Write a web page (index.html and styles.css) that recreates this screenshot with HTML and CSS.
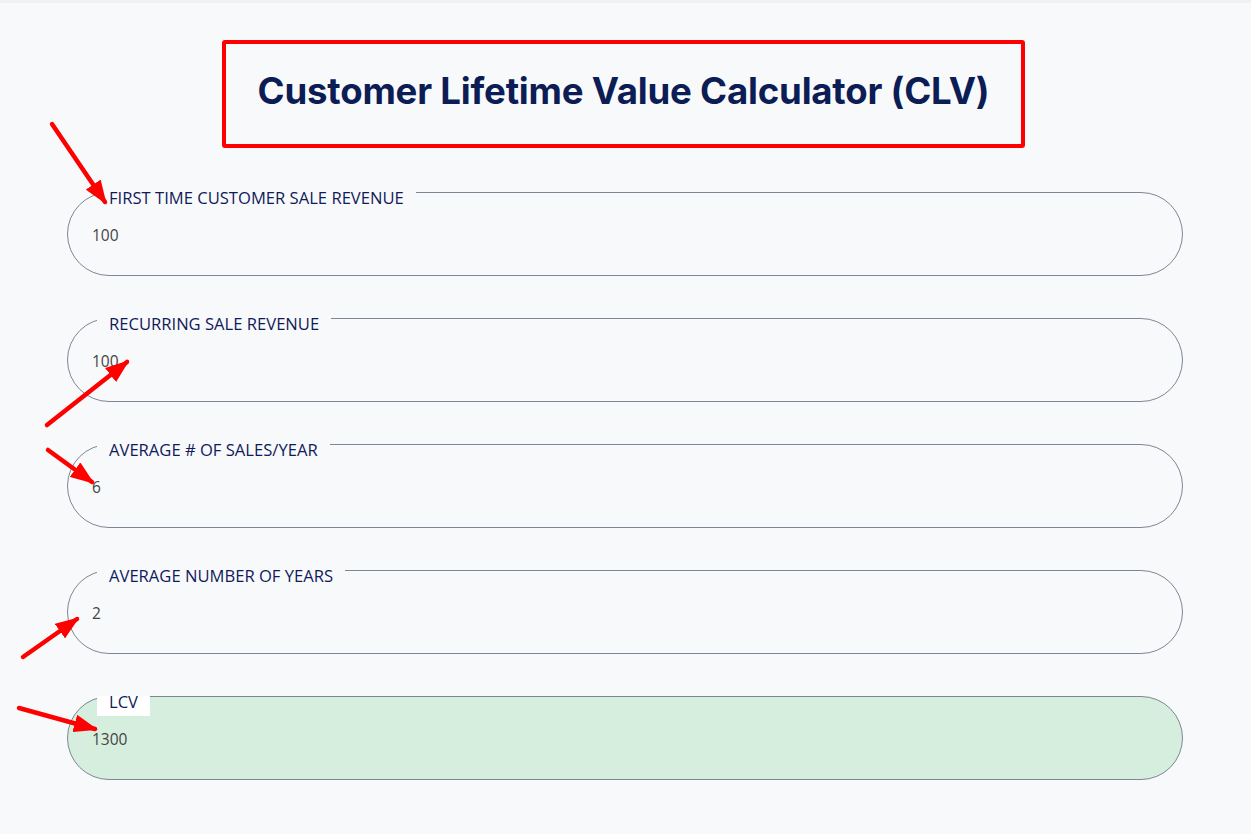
FILE: index.html
```html
<!DOCTYPE html>
<html lang="en">
<head>
<meta charset="utf-8">
<title>Customer Lifetime Value Calculator (CLV)</title>
<link rel="stylesheet" href="styles.css">
</head>
<body>
<div class="page">
  <div class="title-box">
    <h1 class="title">Customer Lifetime Value Calculator (CLV)</h1>
  </div>
  <div class="fields">
    <div class="field">
      <div class="label">FIRST TIME CUSTOMER SALE REVENUE</div>
      <div class="value">100</div>
    </div>
    <div class="field">
      <div class="label">RECURRING SALE REVENUE</div>
      <div class="value">100</div>
    </div>
    <div class="field">
      <div class="label">AVERAGE # OF SALES/YEAR</div>
      <div class="value">6</div>
    </div>
    <div class="field">
      <div class="label">AVERAGE NUMBER OF YEARS</div>
      <div class="value">2</div>
    </div>
    <div class="field field-result">
      <div class="label label-result">LCV</div>
      <div class="value">1300</div>
    </div>
  </div>
  <svg class="annotations" width="1251" height="834" viewBox="0 0 1251 834" aria-hidden="true">
    <defs>
      <marker id="head" viewBox="0 0 24 18" markerWidth="24" markerHeight="18" refX="21" refY="9" orient="auto" markerUnits="userSpaceOnUse">
        <path d="M0,0 L24,9 L0,18 Z" fill="#ff0000"/>
      </marker>
    </defs>
    <g stroke="#ff0000" stroke-width="4.5" stroke-linecap="round" fill="none">
      <line x1="52" y1="124" x2="105" y2="202" marker-end="url(#head)"/>
      <line x1="47" y1="425" x2="127" y2="362" marker-end="url(#head)"/>
      <line x1="48" y1="450" x2="92" y2="482" marker-end="url(#head)"/>
      <line x1="23" y1="657" x2="77" y2="619" marker-end="url(#head)"/>
      <line x1="19" y1="708" x2="95" y2="729" marker-end="url(#head)"/>
    </g>
  </svg>
</div>
</body>
</html>
```

FILE: styles.css
```css
* {
  box-sizing: border-box;
}

html, body {
  margin: 0;
  padding: 0;
  background: #f8f9fb;
}

.page {
  position: relative;
  width: 1251px;
  height: 834px;
  margin: 0;
  padding-top: 40px;
  border-top: 3px solid #f1f2f4;
  font-family: "Open Sans", "Noto Sans", sans-serif;
  overflow: hidden;
}

.title-box {
  width: 803px;
  height: 108px;
  margin: -3px auto 0;
  padding-bottom: 6px;
  border: 4px solid #ff0000;
  border-radius: 3px;
  display: flex;
  align-items: center;
  justify-content: center;
  position: relative;
  left: -2px;
}

.title {
  margin: 0;
  font-family: Inter, "Liberation Sans", sans-serif;
  font-weight: 700;
  font-size: 36.6px;
  color: #0c1d55;
  letter-spacing: -0.2px;
}

.fields {
  display: flex;
  flex-direction: column;
  gap: 42px;
  width: 1116px;
  margin: 44px 0 0 67px;
}

.field {
  height: 84px;
  border: 1px solid #7d8794;
  border-radius: 42px;
  padding-left: 24px;
}

.field-result {
  background: #d6eedd;
}

.label {
  width: fit-content;
  margin: -1px 0 0 5px;
  padding: 0 12px;
  height: 20px;
  line-height: 11px;
  font-size: 16.6px;
  font-weight: 500;
  color: #111a5a;
  background: #f8f9fb;
}

.label-result {
  background: #ffffff;
}

.value {
  margin-top: 13px;
  line-height: 20px;
  font-size: 15.5px;
  color: #444;
}

.annotations {
  position: absolute;
  left: 0;
  top: -3px;
  pointer-events: none;
}
```
